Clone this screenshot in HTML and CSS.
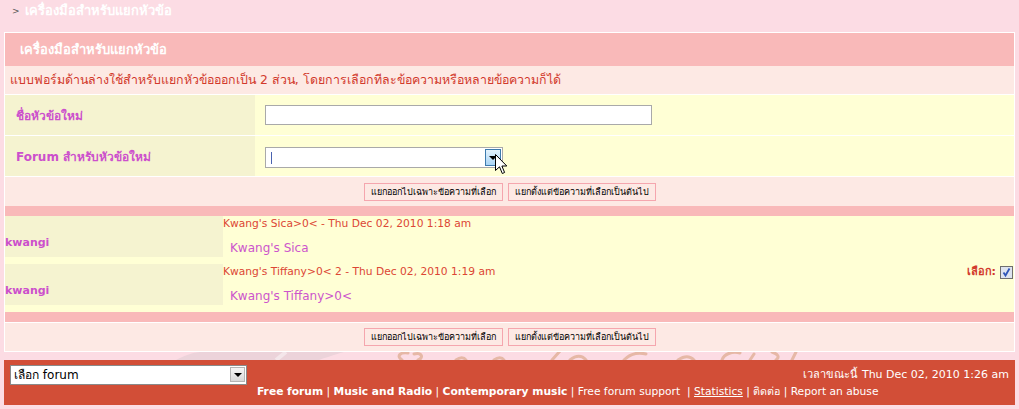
FILE: index.html
```html
<!DOCTYPE html>
<html lang="th">
<head>
    <meta charset="UTF-8">
    <title>เครื่องมือสำหรับแยกหัวข้อ</title>
    <link rel="stylesheet" href="styles.css">
</head>
<body>
    <div class="crumb">
        <span class="crumb-arrow">&gt;</span>
        <a href="#">เครื่องมือสำหรับแยกหัวข้อ</a>
    </div>

    <div class="panel">
        <div class="cat-head">เครื่องมือสำหรับแยกหัวข้อ</div>
        <div class="intro">แบบฟอร์มด้านล่างใช้สำหรับแยกหัวข้อออกเป็น 2 ส่วน, โดยการเลือกทีละข้อความหรือหลายข้อความก็ได้</div>

        <div class="form-row">
            <div class="form-label">ชื่อหัวข้อใหม่</div>
            <div class="form-field"><input type="text" class="subject"></div>
        </div>
        <div class="form-row">
            <div class="form-label">Forum สำหรับหัวข้อใหม่</div>
            <div class="form-field">
                <div class="fake-select">
                    <span class="caret"></span>
                    <span class="drop-btn drop-hover"><span class="tri"></span></span>
                    <!-- mouse pointer over the dropdown -->
                    <svg class="pointer" width="13" height="21" viewBox="0 0 13 21">
                        <path d="M0.5 0.5 L0.5 16.5 L4.5 12.8 L7.3 19.5 L9.6 18.5 L6.9 12 L11.8 12 Z" fill="#fff" stroke="#000" stroke-width="1"/>
                    </svg>
                </div>
            </div>
        </div>

        <div class="btn-row">
            <button class="btn">แยกออกไปเฉพาะข้อความที่เลือก</button>
            <button class="btn">แยกตั้งแต่ข้อความที่เลือกเป็นต้นไป</button>
        </div>
        <div class="band"></div>

        <div class="post">
            <div class="poster">kwangi</div>
            <div class="post-main">
                <div class="post-head">
                    <span class="post-title">Kwang's Sica&gt;0&lt; - Thu Dec 02, 2010 1:18 am</span>
                </div>
                <div class="post-text">Kwang's Sica</div>
            </div>
        </div>
        <div class="post">
            <div class="poster">kwangi</div>
            <div class="post-main">
                <div class="post-head">
                    <span class="post-title">Kwang's Tiffany&gt;0&lt; 2 - Thu Dec 02, 2010 1:19 am</span>
                    <label class="pick">เลือก:
                        <span class="check">
                            <svg width="11" height="11" viewBox="0 0 11 11"><path d="M2.5 5.5 L4.5 8.5 L8.5 1.5" fill="none" stroke="#2f56b8" stroke-width="1.8"/></svg>
                        </span>
                    </label>
                </div>
                <div class="post-text">Kwang's Tiffany&gt;0&lt;</div>
            </div>
        </div>

        <div class="band band-last"></div>
        <div class="btn-row btn-row-last">
            <button class="btn">แยกออกไปเฉพาะข้อความที่เลือก</button>
            <button class="btn">แยกตั้งแต่ข้อความที่เลือกเป็นต้นไป</button>
        </div>
    </div>

    <!-- strip of the page background picture between panel and footer -->
    <div class="deco">
        <svg width="1011" height="8" viewBox="0 0 1011 8">
            <path d="M172 8 C180 4 186 1 196 0 L340 0 C330 3 320 6 315 8 Z" fill="#ecd3da"/>
            <path d="M272 8 L282 0" stroke="#f4e6ea" stroke-width="4"/>
            <g fill="none" stroke="#e6b8a6" stroke-width="3" stroke-linecap="round">
                <path d="M398 8 C392 4 396 0 404 1"/>
                <path d="M410 2 C418 0 420 6 414 8"/>
                <path d="M452 8 C456 5 460 5 462 8"/>
                <path d="M490 8 C494 5 498 5 500 8"/>
                <path d="M548 8 L556 -1"/>
                <path d="M566 8 C572 3 578 3 582 8"/>
                <path d="M620 8 C626 2 634 0 642 2"/>
                <path d="M674 8 C680 4 686 4 690 8"/>
                <path d="M718 8 C720 2 728 -1 736 1"/>
                <path d="M746 8 L750 2"/>
                <path d="M768 0 C774 2 776 5 772 8"/>
                <path d="M788 8 L792 0"/>
            </g>
        </svg>
    </div>

    <div class="footer">
        <div class="jump">
            <div class="jump-select">
                <span>เลือก forum</span>
                <span class="drop-btn"><span class="tri"></span></span>
            </div>
        </div>
        <div class="footer-info">
            <div class="time">เวลาขณะนี้ Thu Dec 02, 2010 1:26 am</div>
            <div class="links">
                <a href="#"><b>Free forum</b></a> | <a href="#"><b>Music and Radio</b></a> | <a href="#"><b>Contemporary music</b></a> | <a href="#">Free forum support</a> &nbsp;| <a href="#" class="u">Statistics</a> | <a href="#">ติดต่อ</a> | <a href="#">Report an abuse</a>
            </div>
        </div>
    </div>
</body>
</html>
```

FILE: styles.css
```css
body {
    margin: 0;
    background: #fcdce4;
    font-family: "DejaVu Sans", Verdana, sans-serif;
    font-size: 11px;
    color: #000;
}
a {
    color: inherit;
    text-decoration: none;
}

.crumb {
    height: 32px;
    padding-left: 12px;
    line-height: 22px;
    box-sizing: border-box;
}
.crumb-arrow {
    font-size: 9px;
    color: #555;
    vertical-align: 1px;
}
.crumb a {
    color: #fff;
    font-weight: bold;
    font-size: 13px;
    margin-left: 2px;
}

.panel {
    margin: 0 4px;
    border: 1px solid #fff;
    background: #fff;
}
.cat-head {
    height: 33px;
    line-height: 33px;
    padding-left: 15px;
    background: #f9b9b9;
    color: #fff;
    font-weight: bold;
    font-size: 13px;
}
.intro {
    height: 28px;
    line-height: 28px;
    padding-left: 5px;
    background: #fde9e4;
    color: #d2392c;
    font-size: 12.4px;
    border-bottom: 1px solid #fff;
}

.form-row {
    display: flex;
    height: 40px;
    border-bottom: 1px solid #fff;
    background: #ffffd5;
}
.form-label {
    width: 250px;
    box-sizing: border-box;
    padding-left: 11px;
    background: #f5f3d0;
    color: #cc4fcc;
    font-weight: bold;
    font-size: 12px;
    display: flex;
    align-items: center;
}
.form-field {
    flex: 1;
    padding-left: 10px;
    display: flex;
    align-items: center;
}
.subject {
    width: 387px;
    height: 20px;
    box-sizing: border-box;
    border: 1px solid #a9a9a9;
    background: #fff;
    margin: 0;
}
.fake-select {
    position: relative;
    width: 238px;
    height: 21px;
    box-sizing: border-box;
    border: 1px solid #a9a9a9;
    background: #fff;
    margin-top: 2px;
}
.caret {
    position: absolute;
    left: 5px;
    top: 4px;
    width: 1px;
    height: 12px;
    background: #4a63b0;
}
.drop-btn {
    position: absolute;
    right: 1px;
    top: 1px;
    width: 15px;
    height: 15px;
    box-sizing: border-box;
    border: 1px solid #b5b5b5;
    background: linear-gradient(#f6f6f6, #d8d8d8);
}
.drop-hover {
    width: 16px;
    height: 17px;
    border-color: #3d7bad;
    background: linear-gradient(#e4f3fd, #a9d4f5);
}
.tri {
    position: absolute;
    left: 3px;
    top: 5px;
    border-left: 4px solid transparent;
    border-right: 4px solid transparent;
    border-top: 4px solid #000;
}
.drop-hover .tri {
    top: 6px;
}
.pointer {
    position: absolute;
    left: 229px;
    top: 6px;
}

.btn-row {
    height: 29px;
    background: #fde9e4;
    display: flex;
    justify-content: center;
    align-items: center;
    gap: 5px;
}
.btn-row-last {
    height: 28px;
}
.btn {
    height: 18px;
    margin: 0;
    padding: 0 6px;
    border: 1px solid #f5a6ae;
    background: #fde9e4;
    font-family: "DejaVu Sans", sans-serif;
    font-size: 9px;
    color: #000;
    line-height: 14px;
}
.band {
    height: 10px;
    background: #f9b9b9;
}
.band-last {
    border-bottom: 1px solid #fff;
}

.post {
    display: flex;
    height: 48px;
    background: #ffffd5;
}
.poster {
    width: 218px;
    height: 41px;
    box-sizing: border-box;
    padding-top: 19px;
    line-height: 15px;
    background: #f5f3d0;
    color: #cc4fcc;
    font-weight: bold;
    font-size: 11px;
}
.post-main {
    flex: 1;
    padding-top: 1px;
}
.post-head {
    display: flex;
    justify-content: space-between;
    align-items: flex-start;
    line-height: 14px;
}
.post-title {
    color: #dc4634;
    font-size: 10.7px;
}
.pick {
    color: #d2392c;
    font-weight: bold;
    font-size: 11px;
    display: flex;
    align-items: center;
    gap: 4px;
    margin-right: 1px;
}
.check {
    width: 13px;
    height: 13px;
    box-sizing: border-box;
    border: 1px solid #6f6f6f;
    background: #dde3ef;
    display: flex;
    align-items: center;
    justify-content: center;
}
.post-text {
    margin-top: 9px;
    padding-left: 7px;
    line-height: 16px;
    color: #cc55cc;
    font-size: 12px;
}

.deco {
    height: 8px;
    margin: 0 4px;
}
.deco svg {
    display: block;
}

.footer {
    margin: 0 4px;
    height: 45px;
    background: #d24e37;
    display: flex;
    color: #fff;
}
.jump {
    padding: 5px 0 0 6px;
}
.jump-select {
    position: relative;
    width: 237px;
    height: 20px;
    box-sizing: border-box;
    border: 1px solid #8a8a8a;
    background: #fff;
    color: #000;
    font-size: 12px;
    line-height: 18px;
    padding-left: 3px;
}
.footer-info {
    flex: 1;
    padding: 6px 6px 0 10px;
    font-size: 10.7px;
    line-height: 17px;
}
.time {
    font-size: 11px;
    text-align: right;
}
.links a.u {
    text-decoration: underline;
}
```
